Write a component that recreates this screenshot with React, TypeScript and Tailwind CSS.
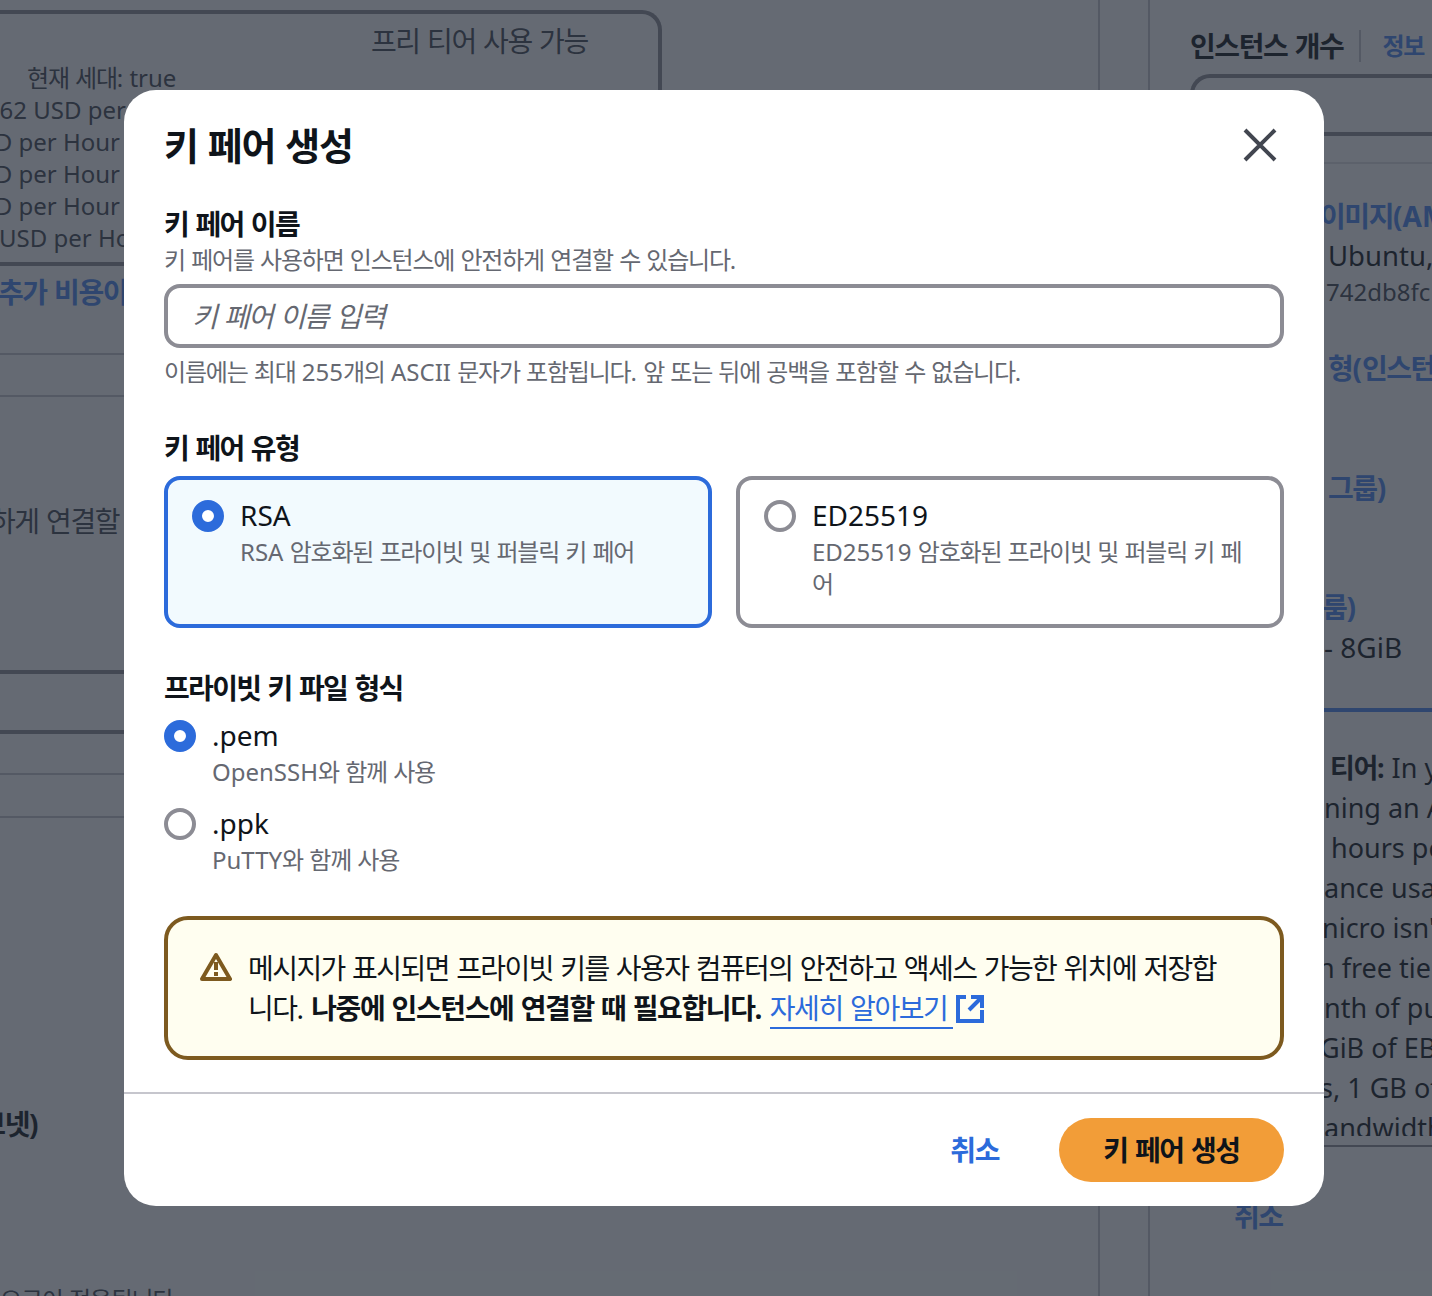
import React from "react";

const FONT = "[font-family:'Noto_Sans','Noto_Sans_CJK_KR',sans-serif]";

// The reference sets Hangul slightly tighter than Latin, so Hangul runs get their own tracking.
function T({ children, k = "tracking-[-0.05em]" }: { children: string; k?: string }) {
  const parts = children.split(/([\uAC00-\uD7A3]+)/).filter(Boolean);
  return (
    <span>
      {parts.map((p, i) =>
        /[\uAC00-\uD7A3]/.test(p) ? (
          <span key={i} className={k}>
            {p}
          </span>
        ) : (
          <React.Fragment key={i}>{p}</React.Fragment>
        )
      )}
    </span>
  );
}

function Radio({ on }: { on: boolean }) {
  return on ? (
    <span className="block h-8 w-8 shrink-0 rounded-full border-[10px] border-[#2c6bdb] bg-white" />
  ) : (
    <span className="block h-8 w-8 shrink-0 rounded-full border-4 border-[#8c8c94] bg-white" />
  );
}

function CloseIcon() {
  return (
    <svg width="36" height="36" viewBox="0 0 36 36" fill="none" stroke="#424650" strokeWidth="4">
      <path d="M3 3 L33 33 M33 3 L3 33" />
    </svg>
  );
}

function WarnIcon() {
  return (
    <svg width="32" height="32" viewBox="0 0 32 32" fill="none" className="shrink-0">
      <path d="M16 4 L30 28 H2 Z" stroke="#7d5a1f" strokeWidth="4" strokeLinejoin="round" />
      <rect x="14" y="11" width="4" height="8" fill="#7d5a1f" />
      <rect x="14" y="21" width="4" height="4" fill="#7d5a1f" />
    </svg>
  );
}

function ExternalIcon() {
  return (
    <svg width="28" height="28" viewBox="0 0 28 28" fill="none" stroke="#2c6bdb" strokeWidth="4" className="inline-block align-[-4px]">
      <path d="M10 2 H2 V26 H26 V15 M15 2 H26 V13 M26 2 L13 15" />
    </svg>
  );
}

const rightText: [string, string][] = [
  ["ml-[180px]", ""],
  ["ml-[174px]", "ning an A"],
  ["ml-[181px]", "hours pe"],
  ["ml-[174px]", "ance usag"],
  ["ml-[172px]", "nicro isn't"],
  ["ml-[168px]", "n free tier"],
  ["ml-[174px]", "nth of pu"],
  ["ml-[170px]", "GiB of EB"],
  ["ml-[170px]", "s, 1 GB of"],
  ["ml-[174px]", "andwidth"],
];

function BackgroundFull() {
  return (
    <div className={`flex h-[1296px] w-[1432px] overflow-hidden bg-white text-[#0f141a] ${FONT}`}>
      <div className="flex h-full w-[1100px] shrink-0 flex-col overflow-hidden border-r-2 border-[#c6c6cd] pt-[10px]">
        <div className="-ml-5 h-[252px] w-[682px] shrink-0 rounded-tr-[20px] border-r-4 border-t-4 border-[#8c8c94]">
          <div className="mt-[7px] pl-[391px] text-[28px] leading-[40px] text-[#424650]"><T>프리 티어 사용 가능</T></div>
          <div className="mt-[1px] flex flex-col whitespace-nowrap text-[24px] leading-[32px] text-[#424650]">
            <span className="ml-[47px]"><T>현재 세대: true</T></span>
            <span className="ml-[-28px]">0.0162 USD per Hour</span>
            <span className="ml-[-16px]">USD per Hour</span>
            <span className="ml-[-16px]">USD per Hour</span>
            <span className="ml-[-16px]">USD per Hour</span>
            <span className="ml-[19px]">USD per Hour</span>
          </div>
        </div>
        <div className="ml-[-2px] w-[660px] shrink-0 whitespace-nowrap border-t-4 border-[#8c8c94] pt-[6px] text-[28px] font-bold leading-[40px] text-[#4a88f0]"><T>추가 비용이 발생</T></div>
        <div className="mt-[41px] h-[44px] shrink-0 border-y-2 border-[#c6c6cd]" />
        <div className="ml-[-10px] mt-[104px] shrink-0 whitespace-nowrap text-[28px] leading-[40px] text-[#424650]"><T>하게 연결할 수</T></div>
        <div className="mt-[129px] h-[64px] shrink-0 border-y-4 border-[#8c8c94]" />
        <div className="mt-[39px] h-[45px] shrink-0 border-y-2 border-[#c6c6cd]" />
        <div className="ml-[-44px] mt-[286px] shrink-0 whitespace-nowrap text-[28px] font-bold leading-[40px] text-[#0f141a]"><T>서브넷)</T></div>
        <div className="ml-[0px] mt-[140px] shrink-0 whitespace-nowrap text-[24px] leading-[32px] text-[#424650]"><T>요구이 적용됩니다</T></div>
      </div>
      <div className="h-full w-[50px] shrink-0 border-r-2 border-[#c6c6cd]" />
      <div className="flex h-full min-w-0 flex-1 flex-col overflow-hidden">
        <div className="mt-[28px] flex h-[36px] shrink-0 items-center pl-[40px]">
          <span className="whitespace-nowrap text-[28px] font-bold leading-[36px]"><T>인스턴스 개수</T></span>
          <span className="ml-[16px] mr-[21px] h-[32px] w-[2px] shrink-0 bg-[#c6c6cd]" />
          <span className="whitespace-nowrap text-[24px] font-bold leading-[36px] text-[#4a88f0]"><T>정보</T></span>
        </div>
        <div className="ml-[40px] mt-[10px] h-[62px] w-[400px] shrink-0 rounded-tl-[20px] border-y-4 border-l-4 border-[#8c8c94]" />
        <div className="mt-[26px] h-[2px] w-full shrink-0 bg-[#e0e0e4]" />
        <div className="ml-[170px] mt-[32px] whitespace-nowrap text-[28px] font-bold leading-[40px] text-[#4a88f0]"><T>이미지(AMI)</T></div>
        <div className="ml-[178px] whitespace-nowrap text-[27.5px] leading-[40px]">Ubuntu, 24.04</div>
        <div className="ml-[176px] whitespace-nowrap text-[24px] leading-[32px] text-[#424650]">742db8fc</div>
        <div className="ml-[178px] mt-[40px] whitespace-nowrap text-[28px] font-bold leading-[40px] text-[#4a88f0]"><T>형(인스턴스)</T></div>
        <div className="ml-[178px] mt-[80px] whitespace-nowrap text-[28px] font-bold leading-[40px] text-[#4a88f0]"><T>그룹)</T></div>
        <div className="ml-[172px] mt-[79px] whitespace-nowrap text-[28px] font-bold leading-[40px] text-[#4a88f0]"><T>룸)</T></div>
        <div className="ml-[174px] whitespace-nowrap text-[28px] leading-[40px] text-[#0f141a]">- 8GiB</div>
        <div className="mt-[41px] h-[4px] w-full shrink-0 bg-[#4a88f0]" />
        <div className="mt-[36px] flex h-[388px] shrink-0 flex-col overflow-hidden whitespace-nowrap text-[27px] leading-[40px] text-[#0f141a]">
          {rightText.map(([cls, t], i) => (
            <span key={i} className={cls}>
              {i === 0 ? (
                <>
                  <b><T>티어:</T></b> In your
                </>
              ) : (
                t
              )}
            </span>
          ))}
        </div>
        <div className="mt-[9px] h-[2px] w-full shrink-0 bg-[#8c8c94]" />
        <div className="ml-[84px] mt-[49px] whitespace-nowrap text-[28px] font-bold leading-[40px] text-[#4a88f0]"><T>취소</T></div>
      </div>
    </div>
  );
}

const LABEL = "tracking-[-0.06em]";

function Modal() {
  return (
    <div className={`flex h-[1116px] w-[1200px] flex-col rounded-[32px] bg-white text-[#0f141a] ${FONT}`}>
      <div className="flex items-start justify-between px-[40px] pt-[27px]">
        <h2 className="text-[38px] font-bold leading-[56px]"><T k="tracking-[-0.03em]">키 페어 생성</T></h2>
        <span className="mr-[6px] mt-[10px] block"><CloseIcon /></span>
      </div>
      <div className="flex flex-1 flex-col px-[40px] pt-[31px]">
        <div className="text-[28px] font-semibold leading-[40px]"><T k={LABEL}>키 페어 이름</T></div>
        <div className="text-[24px] leading-[32px] text-[#656871]"><T>키 페어를 사용하면 인스턴스에 안전하게 연결할 수 있습니다.</T></div>
        <div className="mt-[8px] flex h-[64px] items-center rounded-[16px] border-4 border-[#8c8c94] px-[24px] text-[28px] italic text-[#656871]"><T>키 페어 이름 입력</T></div>
        <div className="mt-[8px] text-[24px] leading-[32px] text-[#656871]"><T>이름에는 최대 255개의 ASCII 문자가 포함됩니다. 앞 또는 뒤에 공백을 포함할 수 없습니다.</T></div>

        <div className="mt-[40px] text-[28px] font-semibold leading-[40px]"><T k={LABEL}>키 페어 유형</T></div>
        <div className="mt-[8px] grid grid-cols-2 gap-[24px]">
          <div className="flex gap-[16px] rounded-[16px] border-4 border-[#2c6bdb] bg-[#f2fafe] px-[24px] pb-[24px] pt-[16px]">
            <span className="mt-[4px]"><Radio on /></span>
            <div>
              <div className="mb-[2px] text-[28px] leading-[38px]">RSA</div>
              <div className="text-[24px] leading-[32px] text-[#656871]"><T>RSA 암호화된 프라이빗 및 퍼블릭 키 페어</T></div>
            </div>
          </div>
          <div className="flex gap-[16px] rounded-[16px] border-4 border-[#8c8c94] px-[24px] pb-[24px] pt-[16px]">
            <span className="mt-[4px]"><Radio on={false} /></span>
            <div>
              <div className="mb-[2px] text-[28px] leading-[38px]">ED25519</div>
              <div className="text-[24px] leading-[32px] text-[#656871]"><T>ED25519 암호화된 프라이빗 및 퍼블릭 키 페어</T></div>
            </div>
          </div>
        </div>

        <div className="mt-[40px] text-[28px] font-semibold leading-[40px]"><T k={LABEL}>프라이빗 키 파일 형식</T></div>
        <div className="mt-[8px] flex gap-[16px]">
          <span className="mt-[4px]"><Radio on /></span>
          <div>
            <div className="mb-[2px] text-[28px] leading-[38px]">.pem</div>
            <div className="text-[24px] leading-[32px] text-[#656871]"><T>OpenSSH와 함께 사용</T></div>
          </div>
        </div>
        <div className="mt-[16px] flex gap-[16px]">
          <span className="mt-[4px]"><Radio on={false} /></span>
          <div>
            <div className="mb-[2px] text-[28px] leading-[38px]">.ppk</div>
            <div className="text-[24px] leading-[32px] text-[#656871]"><T>PuTTY와 함께 사용</T></div>
          </div>
        </div>

        <div className="mt-[40px] flex h-[144px] gap-[16px] rounded-[24px] border-4 border-[#7d5a1f] bg-[#fffef0] py-[28px] pl-[32px] pr-[48px]">
          <span className="mt-[3px]"><WarnIcon /></span>
          <div className="text-[28px] leading-[40px] text-[#0f141a]">
            <T k="tracking-[-0.056em]">메시지가 표시되면 프라이빗 키를 사용자 컴퓨터의 안전하고 액세스 가능한 위치에 저장합니다.</T>{" "}
            <b><T k="tracking-[-0.05em]">나중에 인스턴스에 연결할 때 필요합니다.</T></b>{" "}
            <span className="border-b-2 border-[#2c6bdb] pr-[6px] text-[#2c6bdb]"><T>자세히 알아보기</T></span>
            <span className="ml-[3px]"><ExternalIcon /></span>
          </div>
        </div>
      </div>
      <div className="flex h-[114px] shrink-0 items-center justify-end gap-[60px] border-t-2 border-[#c6c6cd] px-[40px]">
        <span className="text-[28px] font-bold text-[#2c6bdb]"><T>취소</T></span>
        <span className="flex h-[64px] w-[225px] items-center justify-center rounded-full bg-[#f29d38] text-[28px] font-bold text-[#0f141a]"><T>키 페어 생성</T></span>
      </div>
    </div>
  );
}

export default function App() {
  return (
    <div className="relative h-[1296px] w-[1432px] overflow-hidden">
      <BackgroundFull />
      <div className="absolute inset-0 bg-[#232b37]/70" />
      <div className="absolute left-[124px] top-[90px]">
        <Modal />
      </div>
    </div>
  );
}
